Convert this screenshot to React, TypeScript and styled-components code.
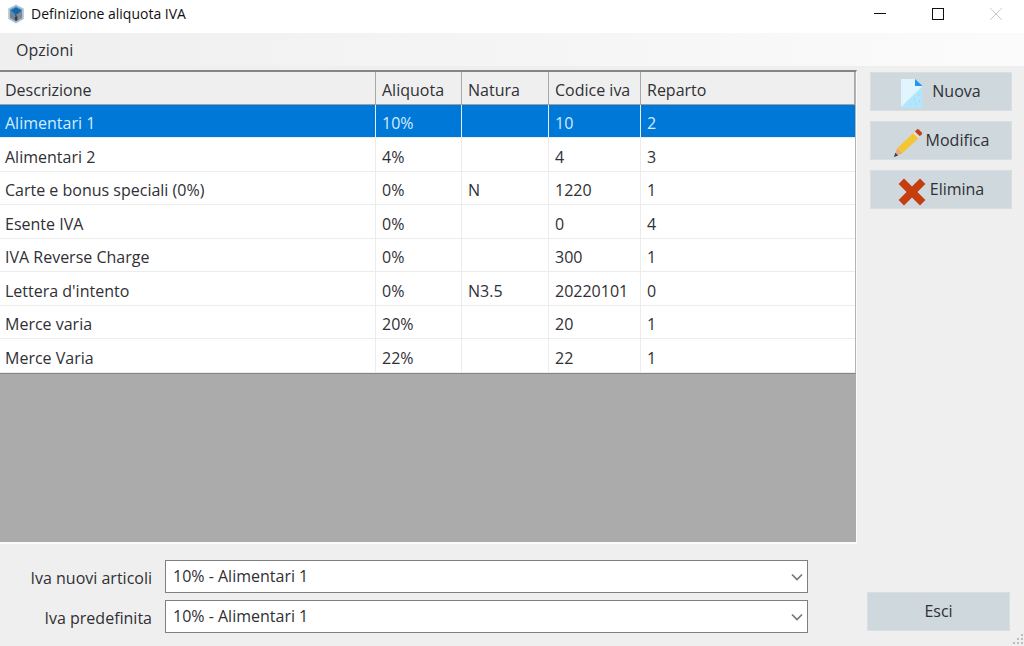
import React from "react";
import styled, { createGlobalStyle } from "styled-components";

const GlobalStyle = createGlobalStyle`
  *, *::before, *::after { box-sizing: border-box; }
  body { margin: 0; background: #efefef; }
  body, button, select, table {
    font-family: "Open Sans", "Noto Sans", "Segoe UI", sans-serif;
    font-size: 16px;
    line-height: 24px;
    color: #303036;
  }
`;

const Window = styled.div`
  min-height: 100vh;
  display: flex;
  flex-direction: column;
  background: #efefef;
`;

const TitleBar = styled.header`
  height: 33px;
  padding: 0 8px;
  display: flex;
  align-items: center;
  background: #ffffff;
`;

const Title = styled.h1`
  flex: 1;
  margin: 0 0 6px 7px;
  font-size: 14px;
  line-height: 20px;
  font-weight: 400;
  color: #111111;
`;

const AppIcon = styled.svg`
  width: 16px;
  height: 20px;
  margin-bottom: 6px;
`;

const WindowControls = styled.div`
  display: flex;
  gap: 30px;
  padding-right: 6px;
  padding-bottom: 6px;
`;

const ControlButton = styled.button<{ $faded?: boolean }>`
  width: 28px;
  height: 27px;
  padding: 0;
  border: 0;
  background: transparent;
  display: grid;
  place-items: center;
  color: ${(p) => (p.$faded ? "#cccccc" : "#111111")};
`;

const MenuBar = styled.nav`
  height: 33px;
  padding: 0 8px;
  display: flex;
  align-items: center;
  background: linear-gradient(to right, #efefef, #fbfbfb);
`;

const MenuItem = styled.button`
  padding: 0 8px;
  border: 0;
  background: transparent;
`;

const Content = styled.div`
  flex: 1;
  display: flex;
  padding-top: 4px;
`;

const MainColumn = styled.main`
  flex: 1;
  min-width: 0;
  display: flex;
  flex-direction: column;
`;

const GridPanel = styled.section`
  flex: 1;
  background: #ababab;
  border-top: 2px solid #858585;
  border-right: 1px solid #fbfbfb;
  border-bottom: 2px solid #fbfbfb;
`;

const Table = styled.table`
  width: 100%;
  table-layout: fixed;
  border-collapse: separate;
  border-spacing: 0;
  border-right: 1px solid #b4b4b4;
  border-bottom: 1px solid #858585;
`;

const Column = styled.col<{ $width?: number }>`
  width: ${(p) => (p.$width ? `${p.$width}px` : "auto")};
`;

const HeadCell = styled.th`
  height: 33px;
  padding: 4px 0 0 6px;
  text-align: left;
  font-weight: 400;
  white-space: nowrap;
  background: #efefef;
  border-right: 1px solid #a8a8a8;
  border-bottom: 1px solid #a0a0a0;
  &:first-child { padding-left: 5px; }
`;

const Row = styled.tr<{ $selected?: boolean }>`
  height: 33px;
  background: ${(p) => (p.$selected ? "#0078d7" : "#ffffff")};
  color: ${(p) => (p.$selected ? "#d5ebfc" : "inherit")};
  &:nth-child(even) { height: 34px; }
`;

const Cell = styled.td`
  padding: 4px 0 0 6px;
  white-space: nowrap;
  border-right: 1px solid #ececec;
  border-bottom: 1px solid #ececec;
  &:first-child { padding-left: 5px; }
  &:last-child { border-right: 0; }
`;

const Form = styled.form`
  padding: 16px 49px 13px 0;
  display: grid;
  grid-template-columns: 152px 1fr;
  column-gap: 13px;
  row-gap: 7px;
`;

const Label = styled.label`
  padding-top: 6px;
  text-align: right;
`;

const SelectWrap = styled.div`
  position: relative;
`;

const Select = styled.select`
  display: block;
  width: 100%;
  height: 33px;
  padding: 0 32px 2px 7px;
  appearance: none;
  border: 1px solid #7f7f7f;
  border-radius: 0;
  background: #ffffff;
`;

const Chevron = styled.svg`
  position: absolute;
  right: 5px;
  top: 13px;
  pointer-events: none;
`;

const SideColumn = styled.aside`
  width: 167px;
  padding: 2px 0 15px;
  display: flex;
  flex-direction: column;
  justify-content: space-between;
`;

const Actions = styled.div`
  padding: 0 12px 0 13px;
  display: flex;
  flex-direction: column;
  gap: 10px;
`;

const ExitArea = styled.div`
  padding: 0 14px 0 10px;
  display: flex;
  flex-direction: column;
`;

const ActionButton = styled.button<{ $gap?: number }>`
  height: 39px;
  padding: 0 0 2px;
  border: 1px solid #d8dfe2;
  background: #cfd8dc;
  display: flex;
  align-items: center;
  justify-content: center;
  gap: ${(p) => p.$gap ?? 0}px;
  svg { margin-top: 7px; }
`;

const Grip = styled.svg`
  position: fixed;
  right: 0;
  bottom: 1px;
`;

const rows = [
  ["Alimentari 1", "10%", "", "10", "2"],
  ["Alimentari 2", "4%", "", "4", "3"],
  ["Carte e bonus speciali (0%)", "0%", "N", "1220", "1"],
  ["Esente IVA", "0%", "", "0", "4"],
  ["IVA Reverse Charge", "0%", "", "300", "1"],
  ["Lettera d'intento", "0%", "N3.5", "20220101", "0"],
  ["Merce varia", "20%", "", "20", "1"],
  ["Merce Varia", "22%", "", "22", "1"],
];

const headers = ["Descrizione", "Aliquota", "Natura", "Codice iva", "Reparto"];

const Logo = () => (
  <AppIcon viewBox="0 0 16 20" aria-hidden="true">
    <path d="M8 0.5 L15.8 4.5 V15 L8 19.5 L0.2 15 V4.5 Z" fill="#a9c6dc" />
    <path d="M8 2.5 L14 5.6 V14 L8 17.5 L2 14 V5.6 Z" fill="#5d8fb8" />
    <path d="M8 3.5 L13.4 6.4 L10.5 9.5 L8.6 10 V13 L6.8 12 V9.8 L2.8 6.4 Z" fill="#1767a8" />
    <path d="M3 8 L4.6 9 V12.2 L7 13.4 V15.6 L3 13.2 Z" fill="#a87058" />
    <path d="M9.400 10.5 L13.200 8.6 V10.6 L11 11.6 V12.4 L12.8 11.8 V13.4 L9.400 15.6 Z" fill="#c07c50" />
    <path d="M7 13 L9.400 12 V16 L8 17 L7 16 Z" fill="#24425f" />
  </AppIcon>
);

const PageIcon = () => (
  <svg width="22" height="30" viewBox="0 0 22 30" aria-hidden="true">
    <path d="M0 0 H14 L21.500 7 V29 H0 Z" fill="#b3e5fc" />
    <path d="M0 0 H14 V7 H21.500 L0 28 Z" fill="#e1f5fe" />
    <path d="M14 0 L21.500 7 H14 Z" fill="#2196f3" />
    <path d="M9 25h1M14 25h1M18 22h1M13 20h1M17 16h1" stroke="#8accea" />
  </svg>
);

const PencilIcon = () => (
  <svg width="30" height="30" viewBox="0 0 32 32" aria-hidden="true">
    <path d="M22.500 4.500 L28 10 L10 27 L4.500 21.500 Z" fill="#f4c534" />
    <path d="M4.500 21.500 L10 27 L1.200 30.800 Z" fill="#e8a97b" />
    <path d="M2.500 26.500 L5.500 29.200 L1 31 Z" fill="#37474f" />
    <path d="M21.500 5.500 L24 3.200 L29.300 8.500 L27 11 Z" fill="#dce3e6" />
    <path d="M23.300 3.700 L25.500 1.500 Q26.500 0.700 27.500 1.500 L30.700 4.700 Q31.500 5.700 30.700 6.700 L28.600 8.900 Z" fill="#c8401a" />
  </svg>
);

const CrossIcon = () => (
  <svg width="28" height="28" viewBox="0 0 28 28" aria-hidden="true">
    <path
      d="M6 0.600 L14 8.600 L22 0.600 L27.400 6 L19.400 14 L27.400 22 L22 27.400 L14 19.400 L6 27.400 L0.600 22 L8.600 14 L0.600 6 Z"
      fill="#c63d12"
    />
  </svg>
);

const Dropdown = ({ id, label }: { id: string; label: string }) => (
  <>
    <Label htmlFor={id}>{label}</Label>
    <SelectWrap>
      <Select id={id} defaultValue="Alimentari 1">
        {rows.map(([name, rate]) => (
          <option key={name} value={name}>{`${rate} - ${name}`}</option>
        ))}
      </Select>
      <Chevron width="12" height="9" viewBox="0 0 12 9" aria-hidden="true">
        <path d="M1 1.500 L6 6.500 L11 1.500" fill="none" stroke="#777777" strokeWidth="1.700" />
      </Chevron>
    </SelectWrap>
  </>
);

export default function App() {
  return (
    <Window>
      <GlobalStyle />
      <TitleBar>
        <Logo />
        <Title>Definizione aliquota IVA</Title>
        <WindowControls>
          <ControlButton aria-label="Riduci a icona">
            <svg width="12" height="12"><path d="M0 5.500H12" stroke="currentColor" /></svg>
          </ControlButton>
          <ControlButton aria-label="Ingrandisci">
            <svg width="12" height="12"><rect x="0.500" y="0.500" width="11" height="11" fill="none" stroke="currentColor" /></svg>
          </ControlButton>
          <ControlButton aria-label="Chiudi" $faded disabled>
            <svg width="12" height="12"><path d="M0 0L12 12M12 0L0 12" stroke="currentColor" /></svg>
          </ControlButton>
        </WindowControls>
      </TitleBar>
      <MenuBar>
        <MenuItem>Opzioni</MenuItem>
      </MenuBar>
      <Content>
        <MainColumn>
          <GridPanel>
            <Table>
              <colgroup>
                <Column $width={376} />
                <Column $width={86} />
                <Column $width={87} />
                <Column $width={92} />
                <Column />
              </colgroup>
              <thead>
                <tr>
                  {headers.map((h) => (
                    <HeadCell key={h} scope="col">{h}</HeadCell>
                  ))}
                </tr>
              </thead>
              <tbody>
                {rows.map((row, i) => (
                  <Row key={row[0]} $selected={i === 0}>
                    {row.map((value, c) => (
                      <Cell key={c}>{value}</Cell>
                    ))}
                  </Row>
                ))}
              </tbody>
            </Table>
          </GridPanel>
          <Form>
            <Dropdown id="iva-nuovi" label="Iva nuovi articoli" />
            <Dropdown id="iva-predefinita" label="Iva predefinita" />
          </Form>
        </MainColumn>
        <SideColumn>
          <Actions>
            <ActionButton $gap={9}><PageIcon />Nuova</ActionButton>
            <ActionButton $gap={3}><PencilIcon />Modifica</ActionButton>
            <ActionButton $gap={4}><CrossIcon />Elimina</ActionButton>
          </Actions>
          <ExitArea>
            <ActionButton>Esci</ActionButton>
          </ExitArea>
        </SideColumn>
      </Content>
      <Grip width="12" height="12" aria-hidden="true">
        <path d="M9 1h2v2h-2zM5 5h2v2h-2zM9 5h2v2h-2zM1 9h2v2h-2zM5 9h2v2h-2zM9 9h2v2h-2z" fill="#bdbdbd" />
      </Grip>
    </Window>
  );
}
